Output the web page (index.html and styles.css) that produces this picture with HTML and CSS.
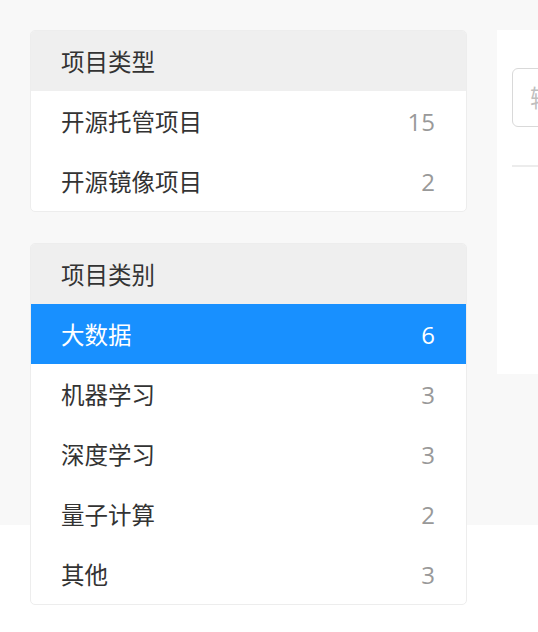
FILE: index.html
```html
<!DOCTYPE html>
<html lang="zh-CN">
<head>
<meta charset="UTF-8">
<meta name="viewport" content="width=device-width, initial-scale=1.0">
<title>项目列表</title>
<link rel="stylesheet" href="styles.css">
</head>
<body>
    <div class="page">
        <!-- Left filter column -->
        <div class="sidebar">
            <div class="card">
                <div class="card-head">项目类型</div>
                <div class="item"><span>开源托管项目</span><span class="count">15</span></div>
                <div class="item"><span>开源镜像项目</span><span class="count">2</span></div>
            </div>

            <div class="card">
                <div class="card-head">项目类别</div>
                <div class="item active"><span>大数据</span><span class="count">6</span></div>
                <div class="item"><span>机器学习</span><span class="count">3</span></div>
                <div class="item"><span>深度学习</span><span class="count">3</span></div>
                <div class="item"><span>量子计算</span><span class="count">2</span></div>
                <div class="item"><span>其他</span><span class="count">3</span></div>
            </div>
        </div>

        <!-- Right content panel (cut off by the window) -->
        <div class="panel">
            <div class="search">输入关键词</div>
            <div class="divider"></div>
        </div>
    </div>
</body>
</html>
```

FILE: styles.css
```css
body {
    margin: 0;
    padding: 0;
    background: #fff;
    font-family: "Noto Sans CJK SC", "Noto Sans", sans-serif;
    overflow: hidden;
}

.page {
    /* grey band stops at 525px, cards run past it */
    background: linear-gradient(to bottom, #f8f8f8 525px, #fff 525px);
    display: flex;
    align-items: flex-start;
    gap: 30px;
    padding: 30px 0 27px 30px;
}

.sidebar {
    width: 437px;
    flex-shrink: 0;
    display: flex;
    flex-direction: column;
    gap: 31px;
}

.card {
    background: #fff;
    border: 1px solid #ededed;
    border-radius: 5px;
    overflow: hidden;
}

.card-head {
    height: 60px;
    line-height: 60px;
    padding: 0 30px;
    background: #efefef;
    color: #333;
    font-size: 23.5px;
}

.item {
    height: 60px;
    display: flex;
    justify-content: space-between;
    align-items: center;
    padding: 0 31px 0 30px;
    color: #333;
    font-size: 23.5px;
}

.item .count {
    font-family: "Open Sans", "Noto Sans", sans-serif;
    font-size: 24px;
    color: #999;
}

.item.active {
    background: #1890ff;
    color: #fff;
}

.item.active .count {
    color: #fff;
}

.panel {
    flex-shrink: 0;
    width: 400px;
    height: 344px;
    background: #fff;
    padding: 38px 0 0 15px;
    box-sizing: border-box;
}

.search {
    height: 59px;
    line-height: 57px;
    border: 1px solid #d9d9d9;
    border-radius: 6px;
    padding: 0 17px;
    color: #bfbfbf;
    font-size: 23.5px;
    box-sizing: border-box;
    white-space: nowrap;
    overflow: hidden;
}

.divider {
    margin-top: 38px;
    height: 2px;
    background: #ececec;
}
```
